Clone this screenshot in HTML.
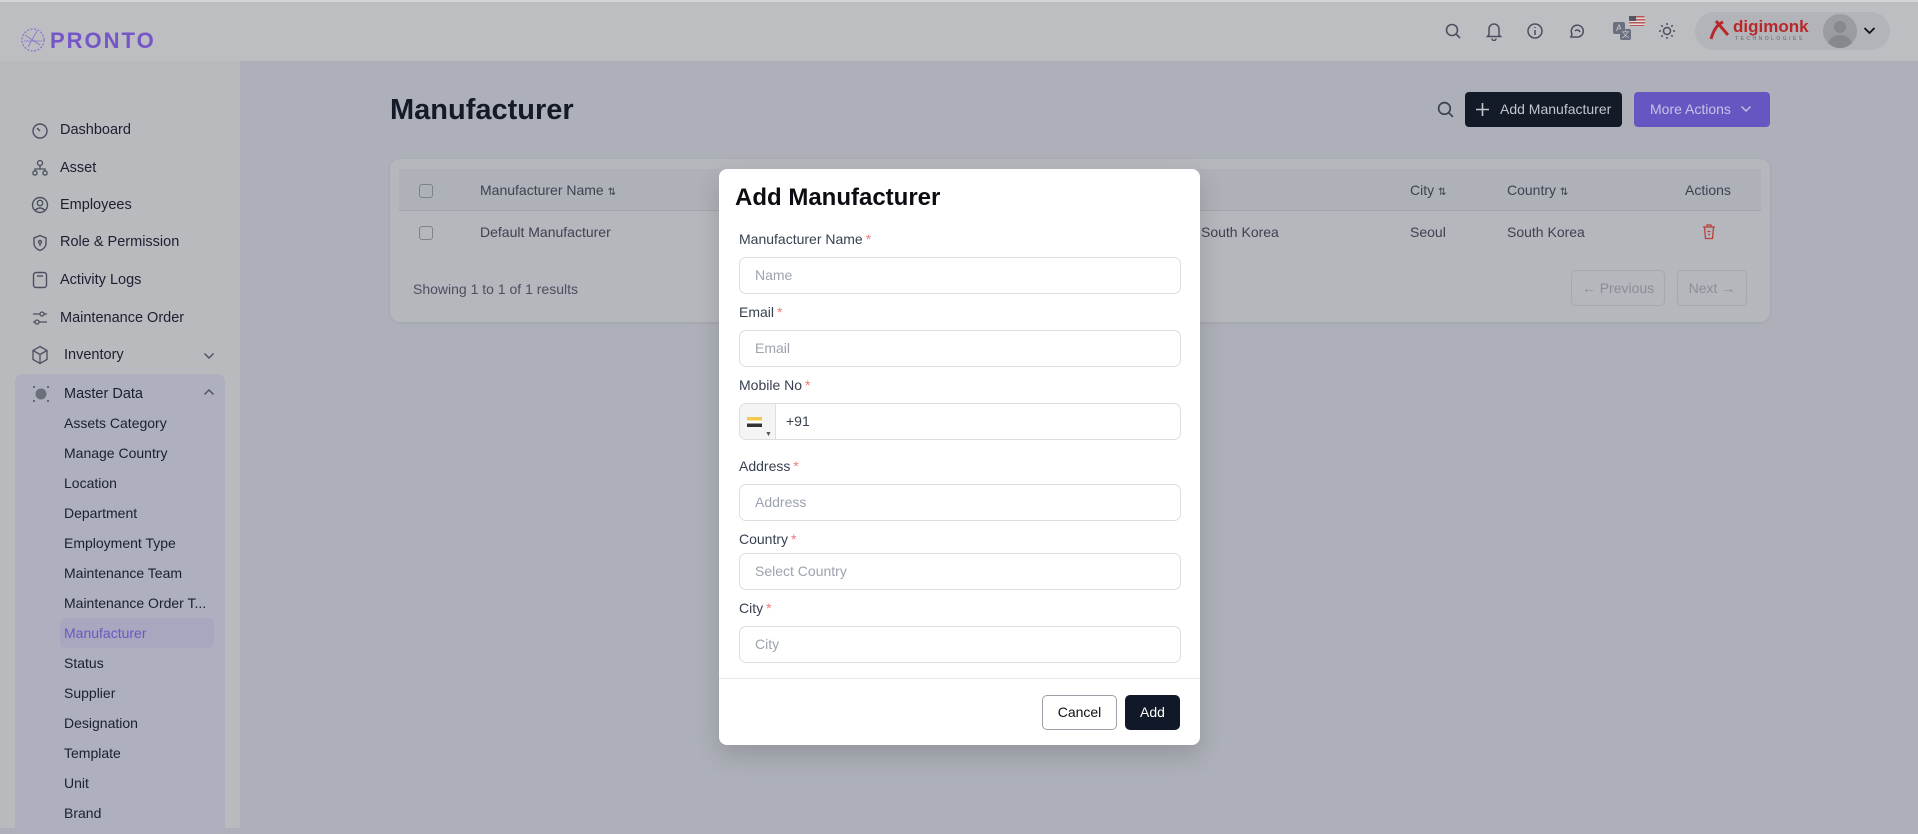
<!DOCTYPE html>
<html><head><meta charset="utf-8"><style>
*{box-sizing:border-box;margin:0;padding:0}
body{width:1918px;height:828px;overflow:hidden;position:relative;font-family:"Liberation Sans",sans-serif;background:#adb0b8;color:#1b2030}
.a{position:absolute}
.hdr{left:0;top:0;width:1918px;height:61px;background:#bdbec2;border-top:2px solid #d4d5d8}
.side{left:0;top:61px;width:240px;height:767px;background:#b9babe}
.si{position:absolute;left:60px;font-size:14.5px;color:#1b2030;transform:translateY(-50%)}
.ic{position:absolute;left:31px;transform:translateY(-50%)}
.sub{position:absolute;left:64px;font-size:14px;color:#1b2030;transform:translateY(-50%);font-weight:500}
.card{left:390px;top:159px;width:1380px;height:163px;background:#b5b7bd;border-radius:10px;box-shadow:0 1px 3px rgba(0,0,0,.08)}
.th{position:absolute;font-size:14px;color:#3d4250;transform:translateY(-50%)}
.cb{position:absolute;width:14px;height:14px;border:1px solid #7e828c;border-radius:3px}
.modal{left:719px;top:169px;width:481px;height:576px;background:#fff;border-radius:8px;box-shadow:0 10px 25px rgba(0,0,0,.15)}
.lb{position:absolute;left:20px;font-size:14px;color:#374151}
.lb i{color:#f07a7a;font-style:normal;margin-left:3px}
.in{position:absolute;left:20px;width:442px;height:37px;border:1px solid #dcdee2;border-radius:7px;font-size:14px;color:#9ca3af;padding-left:15px;line-height:35px}
</style></head><body>
<div class="a hdr"></div>
<svg class="a" style="left:20px;top:25px" width="26" height="30" viewBox="0 0 26 30"><circle cx="13" cy="15" r="11" fill="none" stroke="#8a72d0" stroke-width="1.3" stroke-dasharray="2 1.5"/><path d="M5 10L20 20M8 22L17 6M4 16H22" stroke="#8a72d0" stroke-width="0.8"/></svg>
<div class="a" style="left:50px;top:28px;font-size:22px;font-weight:bold;letter-spacing:2px;color:#7556c9">PRONTO</div>
<svg class="a" style="left:1444px;top:22px" width="18" height="18" viewBox="0 0 18 18" fill="none" stroke="#4b5060" stroke-width="1.6"><circle cx="8" cy="8" r="5.5"/><path d="M12 12l4 4"/></svg>
<svg class="a" style="left:1485px;top:21px" width="18" height="20" viewBox="0 0 18 20" fill="none" stroke="#4b5060" stroke-width="1.5"><path d="M4 14V8a5 5 0 0110 0v6l1.5 1.5h-13zM7 17.5a2 2 0 004 0"/></svg>
<svg class="a" style="left:1526px;top:22px" width="18" height="18" viewBox="0 0 18 18" fill="none" stroke="#4b5060" stroke-width="1.5"><circle cx="9" cy="9" r="7"/><path d="M9 8v5M9 5v1"/></svg>
<svg class="a" style="left:1568px;top:22px" width="18" height="18" viewBox="0 0 18 18" fill="none" stroke="#4b5060" stroke-width="1.5"><path d="M3 15l1-3a6 6 0 1 1 4 3zM7 9a3 3 0 0 1 5 1"/></svg>
<div class="a" style="left:1613px;top:22px;width:12px;height:12px;background:#6b7080;border-radius:2px;color:#ccc;font-size:9px;text-align:center;line-height:12px">A</div>
<div class="a" style="left:1620px;top:29px;width:11px;height:11px;background:#6b7080;border-radius:2px;color:#ccc;font-size:8px;text-align:center;line-height:11px">文</div>
<div class="a" style="left:1629px;top:16px;width:16px;height:10px;background:repeating-linear-gradient(#b55 0 1.5px,#ddd 1.5px 3px);border-radius:2px"><div style="width:7px;height:5px;background:#556"></div></div>
<svg class="a" style="left:1658px;top:22px" width="18" height="18" viewBox="0 0 18 18" fill="none" stroke="#4b5060" stroke-width="1.5"><circle cx="9" cy="9" r="3.5"/><path d="M9 1v2M9 15v2M1 9h2M15 9h2M3.3 3.3l1.4 1.4M13.3 13.3l1.4 1.4M3.3 14.7l1.4-1.4M13.3 4.7l1.4-1.4"/></svg>
<div class="a" style="left:1695px;top:12px;width:195px;height:38px;border-radius:19px;background:#b3b4b9"></div>
<svg class="a" style="left:1707px;top:17px" width="26" height="26" viewBox="0 0 26 26" fill="none" stroke="#b8282a" stroke-width="3"><path d="M4 22Q8 8 16 5M9 4l12 14"/></svg>
<div class="a" style="left:1733px;top:17px;font-size:17px;font-weight:bold;color:#b8282a">digimonk</div>
<div class="a" style="left:1735px;top:36px;font-size:5px;letter-spacing:2.5px;color:#666">TECHNOLOGIES</div>
<div class="a" style="left:1823px;top:14px;width:34px;height:34px;border-radius:50%;background:#9a9ca2;overflow:hidden"><div style="position:absolute;left:11px;top:7px;width:12px;height:12px;border-radius:50%;background:#86888e"></div><div style="position:absolute;left:5px;top:21px;width:24px;height:20px;border-radius:50%;background:#86888e"></div></div>
<svg class="a" style="left:1863px;top:26px" width="13" height="9" viewBox="0 0 13 9"><path d="M1.5 2l5 5 5-5" fill="none" stroke="#111" stroke-width="1.8"/></svg>

<div class="a side"></div>
<svg class="ic" style="top:131px" width="18" height="18" viewBox="0 0 18 18" fill="none" stroke="#4b5060" stroke-width="1.4"><circle cx="9" cy="9" r="7"/><path d="M6 6l3 3"/></svg><div class="si" style="top:130px">Dashboard</div>
<svg class="ic" style="top:168px" width="18" height="18" viewBox="0 0 18 18" fill="none" stroke="#4b5060" stroke-width="1.3"><circle cx="9" cy="4" r="2.5"/><rect x="2" y="12" width="4" height="4" rx="1.5"/><rect x="12" y="12" width="4" height="4" rx="1.5"/><path d="M9 6.5v3M4 12v-2h10v2"/></svg><div class="si" style="top:168px">Asset</div>
<svg class="ic" style="top:205px" width="18" height="18" viewBox="0 0 18 18" fill="none" stroke="#4b5060" stroke-width="1.4"><circle cx="9" cy="9" r="7.5"/><circle cx="9" cy="7" r="2.7"/><path d="M4 14.5q5-5 10 0"/></svg><div class="si" style="top:205px">Employees</div>
<svg class="ic" style="top:243px" width="18" height="18" viewBox="0 0 18 18" fill="none" stroke="#4b5060" stroke-width="1.4"><path d="M9 1.5l6 2.5v5c0 4-3 6.5-6 7.5-3-1-6-3.5-6-7.5V4z"/><circle cx="9" cy="8" r="1.5"/><path d="M9 9.5v2.5"/></svg><div class="si" style="top:242px">Role &amp; Permission</div>
<svg class="ic" style="top:280px" width="18" height="18" viewBox="0 0 18 18" fill="none" stroke="#4b5060" stroke-width="1.4"><rect x="2.5" y="1.5" width="13" height="15" rx="2.5"/><path d="M6 5h6"/></svg><div class="si" style="top:280px">Activity Logs</div>
<svg class="ic" style="top:318px" width="18" height="18" viewBox="0 0 18 18" fill="none" stroke="#4b5060" stroke-width="1.3"><path d="M2 5h7M13 5h3M2 13h2M8 13h8"/><circle cx="11" cy="5" r="2"/><circle cx="6" cy="13" r="2"/></svg><div class="si" style="top:318px">Maintenance Order</div>
<svg class="ic" style="top:355px" width="18" height="20" viewBox="0 0 18 20" fill="none" stroke="#4b5060" stroke-width="1.3"><path d="M9 1.5l7 4v9l-7 4-7-4v-9zM2 5.5l7 4 7-4M9 9.5v9"/></svg><div class="si" style="top:355px;left:64px">Inventory</div>
<svg class="a" style="left:203px;top:352px" width="12" height="8" viewBox="0 0 12 8"><path d="M1.5 1.5l4.5 4.5 4.5-4.5" fill="none" stroke="#4b5060" stroke-width="1.4"/></svg>
<div class="a" style="left:15px;top:374px;width:210px;height:460px;background:#aeafbf;border-radius:8px"></div>
<div class="a" style="left:60px;top:618px;width:154px;height:30px;background:#a7a8bf;border-radius:5px"></div>
<svg class="ic" style="top:394px" width="20" height="20" viewBox="0 0 20 20"><circle cx="10" cy="10" r="5.5" fill="#6b6f7c"/><g fill="#4b5060"><circle cx="3" cy="3" r="1"/><circle cx="17" cy="3" r="1"/><circle cx="3" cy="17" r="1"/><circle cx="17" cy="17" r="1"/></g></svg>
<div class="si" style="top:394px;left:64px">Master Data</div>
<svg class="a" style="left:203px;top:388px" width="12" height="8" viewBox="0 0 12 8"><path d="M1.5 6.5l4.5-4.5 4.5 4.5" fill="none" stroke="#4b5060" stroke-width="1.4"/></svg>
<div class="sub" style="top:423px">Assets Category</div>
<div class="sub" style="top:453px">Manage Country</div>
<div class="sub" style="top:483px">Location</div>
<div class="sub" style="top:513px">Department</div>
<div class="sub" style="top:543px">Employment Type</div>
<div class="sub" style="top:573px">Maintenance Team</div>
<div class="sub" style="top:603px">Maintenance Order T...</div>
<div class="sub" style="top:633px;color:#6a58c2">Manufacturer</div>
<div class="sub" style="top:663px">Status</div>
<div class="sub" style="top:693px">Supplier</div>
<div class="sub" style="top:723px">Designation</div>
<div class="sub" style="top:753px">Template</div>
<div class="sub" style="top:783px">Unit</div>
<div class="sub" style="top:813px">Brand</div>

<div class="a" style="left:390px;top:94px;font-size:29px;font-weight:bold;color:#151a28">Manufacturer</div>
<svg class="a" style="left:1436px;top:100px" width="19" height="19" viewBox="0 0 18 18" fill="none" stroke="#3d4250" stroke-width="1.6"><circle cx="8" cy="8" r="5.5"/><path d="M12 12l4 4"/></svg>
<div class="a" style="left:1465px;top:92px;width:157px;height:35px;background:#131a28;border-radius:4px;color:#c4c6cc;font-size:14px;line-height:35px;padding-left:35px">Add Manufacturer</div>
<svg class="a" style="left:1475px;top:102px" width="15" height="15" viewBox="0 0 15 15"><path d="M7.5 1v13M1 7.5h13" stroke="#c4c6cc" stroke-width="1.6"/></svg>
<div class="a" style="left:1634px;top:92px;width:136px;height:35px;background:#6656c2;border-radius:4px;color:#c7c3e8;font-size:14px;line-height:35px;padding-left:16px">More Actions</div>
<svg class="a" style="left:1740px;top:105px" width="12" height="8" viewBox="0 0 12 8"><path d="M1.5 1.5l4.5 4.5 4.5-4.5" fill="none" stroke="#c7c3e8" stroke-width="1.4"/></svg>

<div class="a card">
<div class="a" style="left:9px;top:10px;width:1362px;height:42px;background:#aeb1b8;border-bottom:1px solid #a2a5ad"></div>
<div class="cb" style="left:29px;top:25px"></div>
<div class="th" style="left:90px;top:31px">Manufacturer Name <span style="font-size:10px">⇅</span></div>
<div class="th" style="left:1020px;top:31px">City <span style="font-size:10px">⇅</span></div>
<div class="th" style="left:1117px;top:31px">Country <span style="font-size:10px">⇅</span></div>
<div class="th" style="left:1295px;top:31px">Actions</div>
<div class="cb" style="left:29px;top:67px"></div>
<div class="th" style="left:90px;top:73px">Default Manufacturer</div>
<div class="th" style="left:811px;top:73px">South Korea</div>
<div class="th" style="left:1020px;top:73px">Seoul</div>
<div class="th" style="left:1117px;top:73px">South Korea</div>
<svg class="a" style="left:1312px;top:64px" width="14" height="17" viewBox="0 0 14 17" fill="none" stroke="#b8423a" stroke-width="1.3"><path d="M1 4h12M5 4V2h4v2M2.5 4l1 11.5h7l1-11.5M5.5 8.5h3M6 11.5h2"/></svg>
<div class="th" style="left:23px;top:130px;color:#4b5060">Showing 1 to 1 of 1 results</div>
<div class="a" style="left:1181px;top:111px;width:94px;height:36px;border:1px solid #a5a8b0;border-radius:5px;color:#8a8e98;font-size:14px;line-height:34px;text-align:center">← Previous</div>
<div class="a" style="left:1287px;top:111px;width:70px;height:36px;border:1px solid #a5a8b0;border-radius:5px;color:#8a8e98;font-size:14px;line-height:34px;text-align:center">Next →</div>
</div>

<div class="a modal">
<div class="a" style="left:16px;top:15px;font-size:24px;font-weight:bold;color:#0b0d12">Add Manufacturer</div>
<div class="lb" style="top:62px">Manufacturer Name<i>*</i></div>
<div class="in" style="top:88px">Name</div>
<div class="lb" style="top:135px">Email<i>*</i></div>
<div class="in" style="top:161px">Email</div>
<div class="lb" style="top:208px">Mobile No<i>*</i></div>
<div class="in" style="top:234px;padding-left:0;color:#374151;display:flex"><div style="width:36px;height:35px;background:#f4f4f5;border-right:1px solid #dcdee2;border-radius:7px 0 0 7px;position:relative"><div style="position:absolute;left:7px;top:13px;width:15px;height:10px;background:linear-gradient(#f2c94c 0 35%,#fff 35% 65%,#333 65%)"></div><div style="position:absolute;left:25px;top:13px;font-size:7px;color:#555">▼</div></div><span style="padding-left:10px">+91</span></div>
<div class="lb" style="top:289px">Address<i>*</i></div>
<div class="in" style="top:315px">Address</div>
<div class="lb" style="top:362px">Country<i>*</i></div>
<div class="in" style="top:384px">Select Country</div>
<div class="lb" style="top:431px">City<i>*</i></div>
<div class="in" style="top:457px">City</div>
<div class="a" style="left:0;top:509px;width:481px;height:1px;background:#e5e7eb"></div>
<div class="a" style="left:323px;top:526px;width:75px;height:35px;border:1px solid #9ca0a8;border-radius:5px;font-size:14px;line-height:33px;text-align:center;color:#111">Cancel</div>
<div class="a" style="left:406px;top:526px;width:55px;height:35px;background:#111827;border-radius:5px;font-size:14px;line-height:35px;text-align:center;color:#fff">Add</div>
</div>
</body></html>
